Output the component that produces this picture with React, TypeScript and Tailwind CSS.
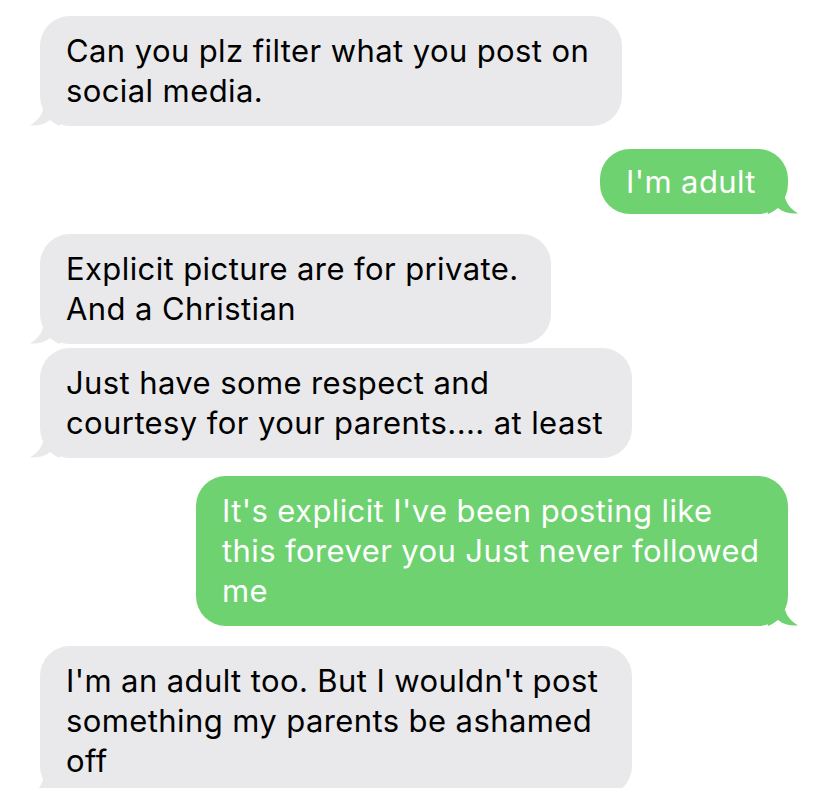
import React from "react";

type Msg = { side: "in" | "out"; lines: string[]; w: number; gap: number };

const messages: Msg[] = [
  { side: "in", lines: ["Can you plz filter what you post on", "social media."], w: 582, gap: 16 },
  { side: "out", lines: ["I'm adult"], w: 188, gap: 23 },
  { side: "in", lines: ["Explicit picture are for private.", "And a Christian"], w: 511, gap: 20 },
  { side: "in", lines: ["Just have some respect and", "courtesy for your parents.... at least"], w: 592, gap: 4 },
  { side: "out", lines: ["It's explicit I've been posting like", "this forever you Just never followed", "me"], w: 592, gap: 18 },
  { side: "in", lines: ["I'm an adult too. But I wouldn't post", "something my parents be ashamed", "off"], w: 592, gap: 20 },
];

function Tail({ side }: { side: "in" | "out" }) {
  if (side === "in") {
    return (
      <svg className="absolute bottom-0 -left-[10px]" width="30" height="24" viewBox="0 0 30 24">
        <path d="M14 0 C14 11 9 18 0 23.5 C8 24 15 22 20 18 C24 21 27 23 30 24 L30 0 Z" fill="#e9e9eb" />
      </svg>
    );
  }
  return (
    <svg className="absolute bottom-0 -right-[10px]" width="30" height="24" viewBox="0 0 30 24">
      <path d="M16 0 C16 11 21 18 30 23.5 C22 24 15 22 10 18 C6 21 3 23 0 24 L0 0 Z" fill="#6dd26f" />
    </svg>
  );
}

export default function App() {
  return (
    <div
      className="h-[788px] w-[828px] overflow-hidden bg-white flex flex-col"
      style={{ fontFamily: "Inter, Roboto, 'Liberation Sans', sans-serif" }}
    >
      {messages.map((m, i) => (
        <div
          key={i}
          className={`flex ${m.side === "in" ? "justify-start pl-[40px]" : "justify-end pr-[40px]"}`}
          style={{ marginTop: m.gap }}
        >
          <div
            className={`relative rounded-[30px] px-[26px] text-[31px] leading-[40px] tracking-[0.4px] ${
              m.lines.length === 1 ? "py-[12.5px]" : "py-[15px]"
            } ${m.side === "in" ? "bg-[#e9e9eb] text-black" : "bg-[#6dd26f] text-white"}`}
            style={{ width: m.w }}
          >
            {m.lines.map((l, j) => (
              <div key={j} className="whitespace-nowrap relative z-10">
                {l}
              </div>
            ))}
            <Tail side={m.side} />
          </div>
        </div>
      ))}
    </div>
  );
}
